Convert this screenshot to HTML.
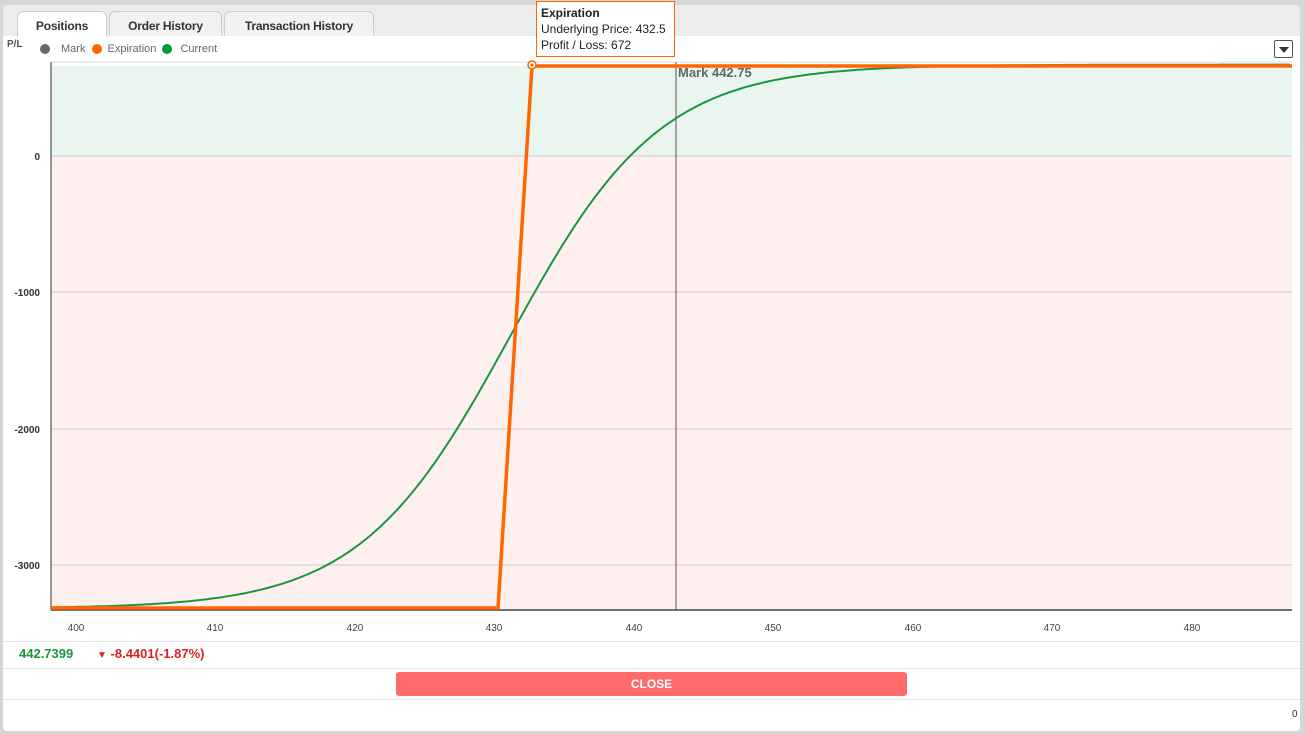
<!DOCTYPE html>
<html><head><meta charset="utf-8"><style>
body{margin:0;width:1305px;height:734px;background:#d6d6d6;font-family:"Liberation Sans",sans-serif;overflow:hidden;position:relative}
.panel{position:absolute;left:3px;top:5px;width:1297px;height:726px;background:#fff;border-radius:4px}
.tabbar{position:absolute;left:3px;top:5px;width:1297px;height:31px;background:#ececec;border-radius:4px 4px 0 0}
.tab{position:absolute;top:11px;height:24px;border:1px solid #ccc;border-bottom:none;border-radius:6px 6px 0 0;background:#f2f2f2;font-size:12px;font-weight:bold;color:#333;text-align:center;line-height:28px;letter-spacing:-0.2px}
.sep{position:absolute;left:3px;width:1297px;height:1px;background:#e4e4e4}
</style></head><body>
<div class="panel"></div>
<div class="tabbar"></div>
<div class="tab" style="left:17px;width:88px;background:#fff;height:25px">Positions</div>
<div class="tab" style="left:109px;width:111px">Order History</div>
<div class="tab" style="left:224px;width:148px">Transaction History</div>
<div style="position:absolute;left:7px;top:39px;font-size:10px;font-weight:bold;color:#555">P/L</div>
<div style="position:absolute;left:40px;top:43px;font-size:11px;color:#666;display:flex;align-items:center;gap:0">
<span style="width:10px;height:10px;border-radius:50%;background:#666;display:inline-block;margin-right:11px"></span>Mark&nbsp;<span style="width:10px;height:10px;border-radius:50%;background:#f60;display:inline-block;margin:0 6px 0 3px"></span>Expiration&nbsp;<span style="width:10px;height:10px;border-radius:50%;background:#093;display:inline-block;margin:0 8px 0 3px"></span>Current</div>
<div style="position:absolute;left:1274px;top:40px;width:17px;height:16px;border:1px solid #555;border-radius:2px;background:#fff"><div style="position:absolute;left:4px;top:6px;border-left:5px solid transparent;border-right:5px solid transparent;border-top:6px solid #333"></div></div>
<svg style="position:absolute;left:0;top:0" width="1305" height="734">
<rect x="51" y="66" width="1241" height="90" fill="#ebf5ef"/>
<rect x="51" y="156" width="1241" height="454" fill="#fff0f0"/>
<line x1="51" y1="62" x2="1292" y2="62" stroke="#ddd"/>
<g stroke="#ccc"><line x1="51" y1="156" x2="1292" y2="156"/><line x1="51" y1="292" x2="1292" y2="292"/><line x1="51" y1="429" x2="1292" y2="429"/><line x1="51" y1="565" x2="1292" y2="565"/></g>
<line x1="51" y1="62" x2="51" y2="610" stroke="#333"/>
<line x1="51" y1="610" x2="1292" y2="610" stroke="#444" stroke-width="1.5"/>
<line x1="676" y1="62" x2="676" y2="610" stroke="#555"/>
<g font-size="10" fill="#333" text-anchor="end" font-weight="bold"><text x="40" y="160">0</text><text x="40" y="296">-1000</text><text x="40" y="433">-2000</text><text x="40" y="569">-3000</text></g>
<g font-size="10" fill="#444" text-anchor="middle"><text x="76" y="631">400</text><text x="215" y="631">410</text><text x="355" y="631">420</text><text x="494" y="631">430</text><text x="634" y="631">440</text><text x="773" y="631">450</text><text x="913" y="631">460</text><text x="1052" y="631">470</text><text x="1192" y="631">480</text></g>
<path id="cur" fill="none" stroke="#1a9641" stroke-width="2"/>
<polyline points="51,608 498,608 532,66 1292,66" fill="none" stroke="#f60" stroke-width="3.5"/>
<circle cx="532" cy="65" r="4" fill="#fff" stroke="#f60" stroke-width="1.5"/><circle cx="532" cy="65" r="1.5" fill="#f60"/>
<text x="678" y="77" font-size="13" font-weight="bold" fill="#666">Mark 442.75</text>
</svg>
<script>
var d="";for(var x=51;x<=1292;x+=3){var p=-1328+2000*Math.tanh((x-510)/150);var y=156-p*0.136;d+=(x==51?"M":"L")+x+","+y.toFixed(1);}
document.getElementById("cur").setAttribute("d",d);
</script>
<div style="position:absolute;left:536px;top:1px;width:139px;height:56px;background:#fff;border:1px solid #f60;font-size:12px;color:#222;line-height:16px;padding:3px 0 0 4px;box-sizing:border-box"><b>Expiration</b><br>Underlying Price: 432.5<br>Profit / Loss: 672</div>
<div class="sep" style="top:641px"></div>
<div style="position:absolute;left:19px;top:646px;font-size:13px;font-weight:bold;color:#1a9641">442.7399</div>
<div style="position:absolute;left:97px;top:646px;font-size:13px;font-weight:bold;color:#d22"><span style="font-size:10px">▼</span> -8.4401(-1.87%)</div>
<div class="sep" style="top:668px"></div>
<div style="position:absolute;left:396px;top:672px;width:511px;height:24px;background:#ff6b6b;border-radius:3px;color:#fff;font-size:12px;font-weight:bold;text-align:center;line-height:24px">CLOSE</div>
<div class="sep" style="top:699px"></div>
<div style="position:absolute;left:1292px;top:709px;font-size:10px;color:#333">0</div>
</body></html>
